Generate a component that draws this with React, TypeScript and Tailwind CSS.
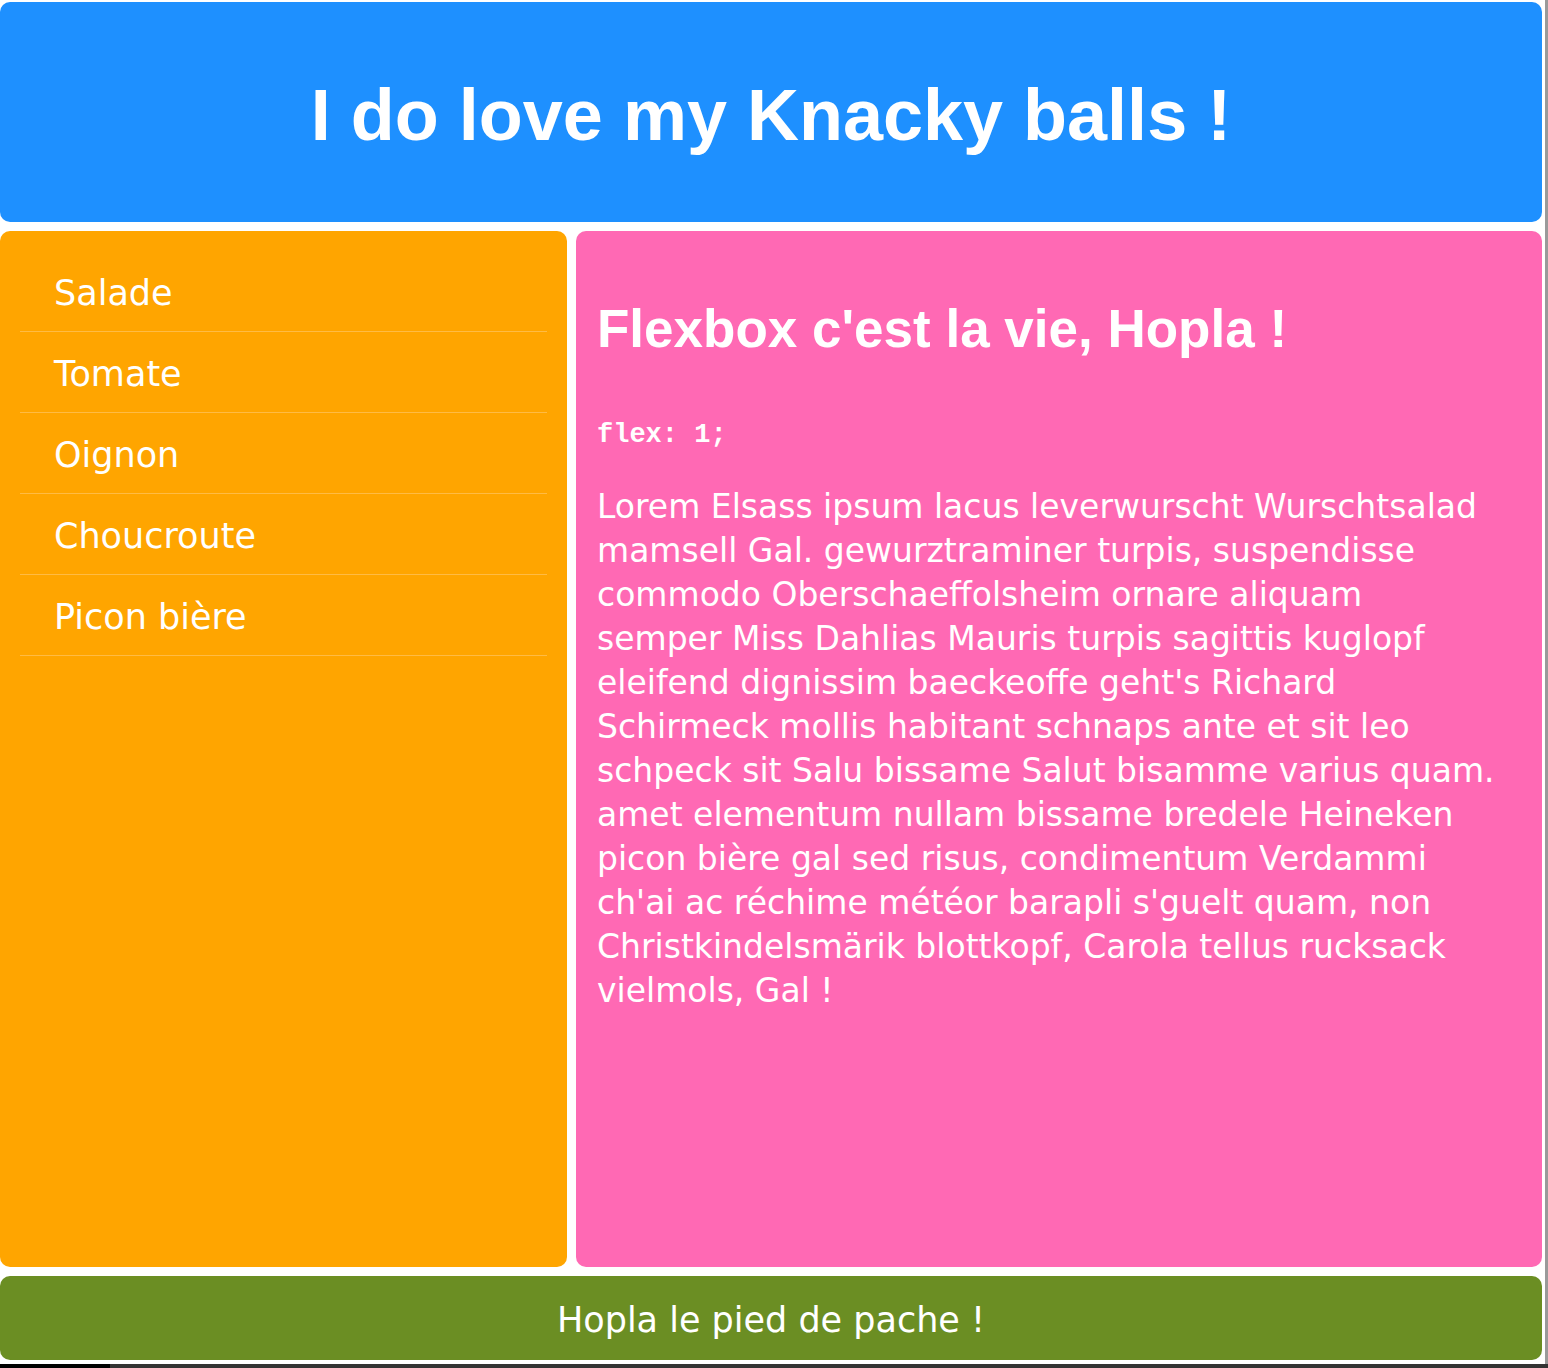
import React from "react";

const lines = [
  "Lorem Elsass ipsum lacus leverwurscht Wurschtsalad",
  "mamsell Gal. gewurztraminer turpis, suspendisse",
  "commodo Oberschaeffolsheim ornare aliquam",
  "semper Miss Dahlias Mauris turpis sagittis kuglopf",
  "eleifend dignissim baeckeoffe geht's Richard",
  "Schirmeck mollis habitant schnaps ante et sit leo",
  "schpeck sit Salu bissame Salut bisamme varius quam.",
  "amet elementum nullam bissame bredele Heineken",
  "picon bière gal sed risus, condimentum Verdammi",
  "ch'ai ac réchime météor barapli s'guelt quam, non",
  "Christkindelsmärik blottkopf, Carola tellus rucksack",
  "vielmols, Gal !",
];

const navItems = ["Salade", "Tomate", "Oignon", "Choucroute", "Picon bière"];

export default function App() {
  return (
    <div className="w-[1548px] h-[1368px] flex flex-col bg-white overflow-hidden">
      <div className="flex flex-1 min-h-0">
        <div className="w-[1542px] flex flex-col pt-[2px] gap-[9px]">
          <header className="h-[220px] shrink-0 rounded-[10px] bg-[#1e90ff] flex items-center justify-center pt-[6px]">
            <h1 className="text-white font-bold text-[72px] leading-[1.15] font-['Liberation_Sans',Arial,sans-serif]">
              I do love my Knacky balls !
            </h1>
          </header>
          <div className="flex gap-[9px] h-[1036px] shrink-0">
            <nav className="w-[567px] shrink-0 rounded-[10px] bg-[#ffa500] p-[20px]">
              <ul>
                {navItems.map((item) => (
                  <li
                    key={item}
                    className="h-[81px] flex items-center pt-[4px] px-[34px] border-b border-[#ffbb44] text-white text-[35px] font-['DejaVu_Sans',sans-serif]"
                  >
                    {item}
                  </li>
                ))}
              </ul>
            </nav>
            <main className="flex-1 rounded-[10px] bg-[#ff69b4] px-[21px] pt-[20px] text-white">
              <h2 className="mt-[47px] font-bold text-[53px] leading-[61px] font-['Liberation_Sans',Arial,sans-serif]">
                Flexbox c'est la vie, Hopla !
              </h2>
              <code className="block mt-[60px] font-bold text-[27px] leading-[32px] font-['Liberation_Mono','Courier_New',monospace]">
                flex: 1;
              </code>
              <p className="mt-[34px] text-[33px] leading-[44px] font-['DejaVu_Sans',sans-serif]">
                {lines.map((l, i) => (
                  <React.Fragment key={i}>
                    {l}
                    {i < lines.length - 1 && <br />}
                  </React.Fragment>
                ))}
              </p>
            </main>
          </div>
          <footer className="h-[84px] shrink-0 rounded-[10px] bg-[#6b8e23] flex items-center justify-center pt-[4px] text-white text-[35px] font-['DejaVu_Sans',sans-serif]">
            Hopla le pied de pache !
          </footer>
        </div>
        <div className="w-[3px] bg-white" />
        <div className="w-[3px] bg-[#9a9a9a]" />
      </div>
      <div className="h-[4px] flex shrink-0">
        <div className="w-[110px] bg-black" />
        <div className="flex-1 bg-[#333333]" />
      </div>
    </div>
  );
}
